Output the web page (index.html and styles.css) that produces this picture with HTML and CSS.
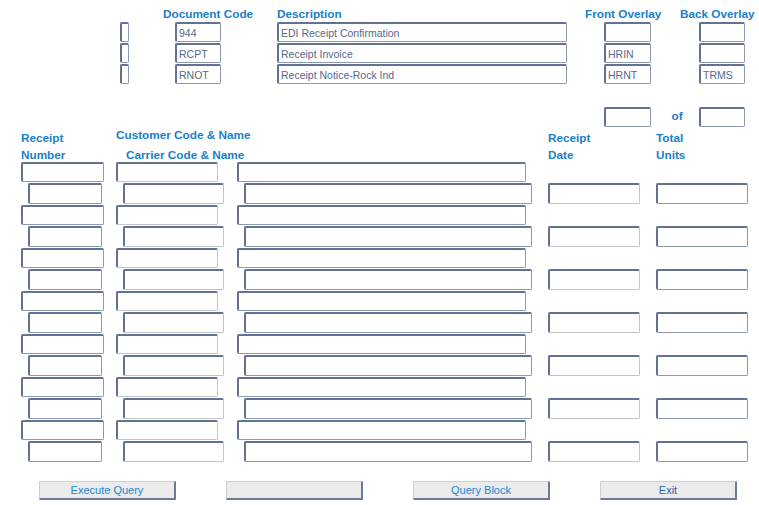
FILE: index.html
```html
<!DOCTYPE html>
<html>
<head>
<meta charset="utf-8">
<link rel="stylesheet" href="styles.css">
</head>
<body>
<div class="page">
  <div class="top-labels">
    <span class="lbl l-doc">Document Code</span>
    <span class="lbl l-desc">Description</span>
    <span class="lbl l-front">Front Overlay</span>
    <span class="lbl l-back">Back Overlay</span>
  </div>
  <div class="top-rows">
    <div class="trow">
      <input class="fld chk" readonly>
      <input class="fld doc" value="944" readonly>
      <input class="fld desc" value="EDI Receipt Confirmation" readonly>
      <input class="fld front" readonly>
      <input class="fld back" readonly>
    </div>
    <div class="trow">
      <input class="fld chk" readonly>
      <input class="fld doc" value="RCPT" readonly>
      <input class="fld desc" value="Receipt Invoice" readonly>
      <input class="fld front" value="HRIN" readonly>
      <input class="fld back" readonly>
    </div>
    <div class="trow">
      <input class="fld chk" readonly>
      <input class="fld doc" value="RNOT" readonly>
      <input class="fld desc" value="Receipt Notice-Rock Ind" readonly>
      <input class="fld front" value="HRNT" readonly>
      <input class="fld back" value="TRMS" readonly>
    </div>
  </div>
  <div class="of-row">
    <input class="fld of1" readonly>
    <span class="lbl of-txt">of</span>
    <input class="fld of2" readonly>
  </div>
  <div class="col-heads">
    <div class="lbl h-num">Receipt<br>Number</div>
    <div class="h-cust">
      <div class="lbl h-cust1">Customer Code &amp; Name</div>
      <div class="lbl h-cust2">Carrier Code &amp; Name</div>
    </div>
    <div class="lbl h-date">Receipt<br>Date</div>
    <div class="lbl h-units">Total<br>Units</div>
  </div>
  <div class="rows">
    <div class="pair">
      <div class="ra"><input class="fld a1" readonly><input class="fld a2 soft" readonly><input class="fld a3" readonly></div>
      <div class="rb"><input class="fld b1" readonly><input class="fld b2 soft" readonly><input class="fld b3" readonly><input class="fld b4 soft" readonly><input class="fld b5" readonly></div>
    </div>
    <div class="pair">
      <div class="ra"><input class="fld a1" readonly><input class="fld a2 soft" readonly><input class="fld a3" readonly></div>
      <div class="rb"><input class="fld b1" readonly><input class="fld b2 soft" readonly><input class="fld b3" readonly><input class="fld b4 soft" readonly><input class="fld b5" readonly></div>
    </div>
    <div class="pair">
      <div class="ra"><input class="fld a1" readonly><input class="fld a2 soft" readonly><input class="fld a3" readonly></div>
      <div class="rb"><input class="fld b1" readonly><input class="fld b2 soft" readonly><input class="fld b3" readonly><input class="fld b4 soft" readonly><input class="fld b5" readonly></div>
    </div>
    <div class="pair">
      <div class="ra"><input class="fld a1" readonly><input class="fld a2 soft" readonly><input class="fld a3" readonly></div>
      <div class="rb"><input class="fld b1" readonly><input class="fld b2 soft" readonly><input class="fld b3" readonly><input class="fld b4 soft" readonly><input class="fld b5" readonly></div>
    </div>
    <div class="pair">
      <div class="ra"><input class="fld a1" readonly><input class="fld a2 soft" readonly><input class="fld a3" readonly></div>
      <div class="rb"><input class="fld b1" readonly><input class="fld b2 soft" readonly><input class="fld b3" readonly><input class="fld b4 soft" readonly><input class="fld b5" readonly></div>
    </div>
    <div class="pair">
      <div class="ra"><input class="fld a1" readonly><input class="fld a2 soft" readonly><input class="fld a3" readonly></div>
      <div class="rb"><input class="fld b1" readonly><input class="fld b2 soft" readonly><input class="fld b3" readonly><input class="fld b4 soft" readonly><input class="fld b5" readonly></div>
    </div>
    <div class="pair">
      <div class="ra"><input class="fld a1" readonly><input class="fld a2 soft" readonly><input class="fld a3" readonly></div>
      <div class="rb"><input class="fld b1" readonly><input class="fld b2 soft" readonly><input class="fld b3" readonly><input class="fld b4 soft" readonly><input class="fld b5" readonly></div>
    </div>
  </div>
  <div class="buttons">
    <button class="btn">Execute Query</button>
    <button class="btn"></button>
    <button class="btn">Query Block</button>
    <button class="btn exit">Exit</button>
  </div>
</div>
</body>
</html>
```
FILE: styles.css
```css
html, body {
  margin: 0;
  padding: 0;
  background: #ffffff;
}
.page {
  width: 759px;
  height: 505px;
  font-family: "Liberation Sans", Arial, sans-serif;
  overflow: hidden;
}
.lbl {
  font-weight: bold;
  font-size: 11.75px;
  color: #1a80c9;
}
.top-labels {
  display: flex;
  padding: 7px 0 0 163px;
  height: 14px;
  line-height: 14px;
  margin-bottom: 1px;
}
.l-doc { width: 114px; }
.l-desc { width: 308px; }
.l-front { width: 95px; }
.l-back { width: 79px; }

.fld {
  box-sizing: border-box;
  display: block;
  margin: 0;
  height: 20px;
  padding: 0 2px;
  font-family: "Liberation Sans", Arial, sans-serif;
  font-size: 10.5px;
  color: #56688a;
  background: #ffffff;
  border-style: solid;
  border-width: 2px 1px 1px 2px;
  border-color: #627392 #8c99ae #8c99ae #627392;
  border-radius: 2px;
  outline: none;
}
.soft {
  border-right-color: #c4c4c4;
  border-bottom-color: #c4c4c4;
}
.top-rows {
  display: flex;
  flex-direction: column;
  gap: 1px;
  padding-left: 120px;
}
.trow {
  display: flex;
}
.chk { width: 9px; padding: 0; }
.doc { width: 46px; margin-left: 46px; }
.desc { width: 290px; margin-left: 56px; }
.front { width: 47px; margin-left: 37px; }
.back { width: 46px; margin-left: 48px; }

.of-row {
  display: flex;
  margin-top: 23px;
  padding-left: 604px;
  height: 20px;
  align-items: center;
}
.of1 { width: 47px; }
.of2 { width: 46px; }
.of-txt {
  width: 48px;
  text-align: center;
  padding-left: 4px;
  box-sizing: border-box;
  line-height: 14px;
  margin-top: -2px;
}

.col-heads {
  display: flex;
  margin-top: 2px;
  height: 33px;
  line-height: 17px;
}
.h-num { margin-left: 21px; width: 95px; }
.h-cust { width: 432px; }
.h-cust1 { margin-top: -3px; }
.h-cust2 { margin-top: 3px; padding-left: 10px; }
.h-date { width: 108px; }
.h-units { width: 90px; }

.rows {
  display: flex;
  flex-direction: column;
  gap: 1px;
}
.pair {
  display: flex;
  flex-direction: column;
  gap: 1px;
}
.ra, .rb { display: flex; }
.ra { padding-left: 21px; }
.rb { padding-left: 28px; }
.rb .fld { height: 21px; }
.a1 { width: 83px; }
.a2 { width: 102px; margin-left: 12px; }
.a3 { width: 289px; margin-left: 19px; }
.b1 { width: 74px; }
.b2 { width: 101px; margin-left: 21px; }
.b3 { width: 288px; margin-left: 20px; }
.b4 { width: 92px; margin-left: 16px; }
.b5 { width: 92px; margin-left: 16px; }

.buttons {
  display: flex;
  gap: 50px;
  padding-left: 39px;
  margin-top: 19px;
}
.btn {
  box-sizing: border-box;
  width: 137px;
  height: 19px;
  margin: 0;
  padding: 0;
  background: #ebebeb;
  border-style: solid;
  border-width: 1px 2px 2px 1px;
  border-color: #cfcfcf #6b7b96 #6b7b96 #cfcfcf;
  border-radius: 1px;
  font-family: "Liberation Sans", Arial, sans-serif;
  font-size: 11px;
  color: #1a86d0;
  line-height: 15px;
}
.exit { color: #2a64a8; }
```
